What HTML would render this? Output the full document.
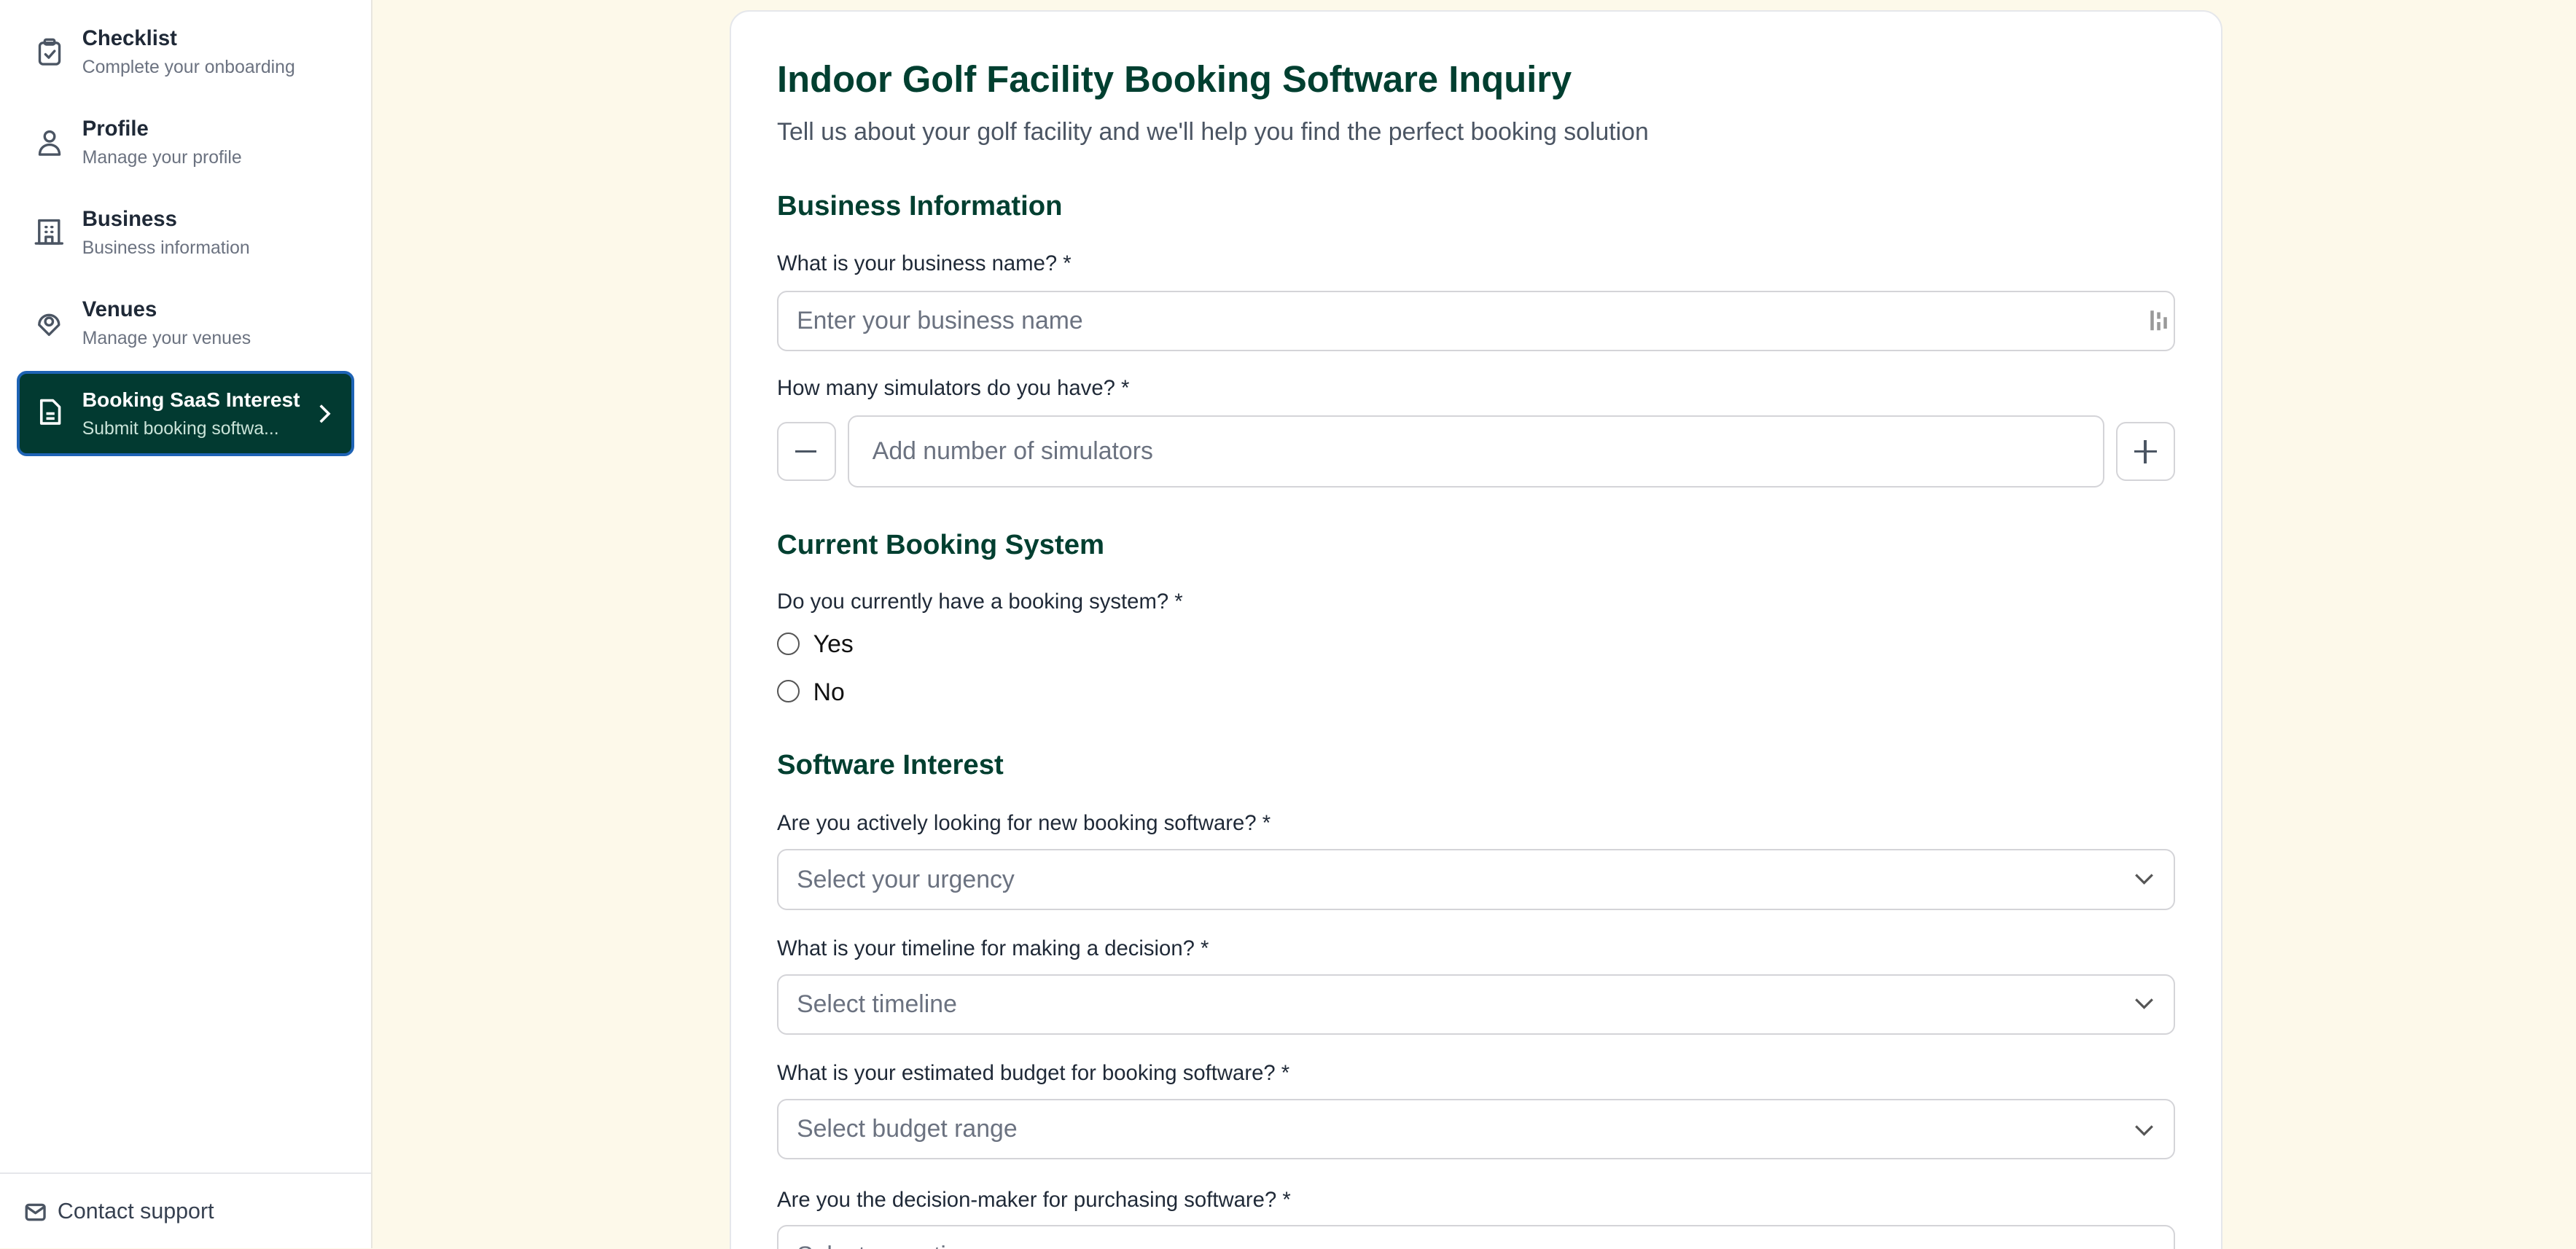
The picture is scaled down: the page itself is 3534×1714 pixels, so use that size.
<!DOCTYPE html>
<html><head><meta charset="utf-8"><style>
html{zoom:2.25383;overflow:hidden;height:760px}
body{margin:0;width:1568px;height:760px;overflow:hidden;background:#fdf9ea;font-family:"Liberation Sans",sans-serif;position:relative}
.a{position:absolute}
.side{left:0;top:0;width:226px;height:760px;background:#fff;border-right:1px solid #e8e6df}
.t{font-size:13px;color:#1f2937;font-weight:bold;white-space:nowrap}
.s{font-size:11px;color:#6b7280;white-space:nowrap}
.ic{stroke:#4b5563;fill:none;stroke-width:1.5;stroke-linecap:round;stroke-linejoin:round}
.card{left:444px;top:6px;width:907px;height:770px;background:#fff;border:1px solid #e5e7eb;border-radius:12px}
.h{color:#013f30;font-weight:bold}
.lb{font-size:13px;color:#1f2937;white-space:nowrap}
.in{border:1px solid #d4d4d8;border-radius:6px;background:#fff;box-sizing:border-box}
.ph{font-size:15px;color:#6b7280;white-space:nowrap}
</style></head><body>
<div class="a side">
 <svg class="a" style="left:22px;top:23px" width="16" height="18" viewBox="0 0 16 18"><rect class="ic" x="2" y="3" width="12" height="13" rx="2"/><rect class="ic" x="5" y="1" width="6" height="3" rx="1"/><path class="ic" d="M5.5 10l2 2 3.5-4"/></svg>
 <div class="a t" style="left:50px;top:16px">Checklist</div><div class="a s" style="left:50px;top:35px">Complete your onboarding</div>
 <svg class="a" style="left:22px;top:78px" width="16" height="18" viewBox="0 0 16 18"><circle class="ic" cx="8" cy="5" r="3"/><path class="ic" d="M2 16c0-4 3-6 6-6s6 2 6 6z"/></svg>
 <div class="a t" style="left:50px;top:71px">Profile</div><div class="a s" style="left:50px;top:90px">Manage your profile</div>
 <svg class="a" style="left:21px;top:132px" width="18" height="18" viewBox="0 0 18 18"><rect class="ic" x="3" y="2" width="12" height="14"/><path class="ic" d="M1 16h16M7 16v-4h4v4M7 6h.5M10.5 6h.5M7 9h.5M10.5 9h.5"/></svg>
 <div class="a t" style="left:50px;top:126px">Business</div><div class="a s" style="left:50px;top:145px">Business information</div>
 <svg class="a" style="left:21px;top:187px" width="18" height="18" viewBox="0 0 18 18"><path class="ic" d="M9 17l-6-6a6 6 0 1 1 12 0z"/><circle class="ic" cx="9" cy="9" r="2.3"/></svg>
 <div class="a t" style="left:50px;top:181px">Venues</div><div class="a s" style="left:50px;top:200px">Manage your venues</div>
 <div class="a" style="left:10px;top:226px;width:202px;height:48px;background:#023a31;border:2px solid #1e63b5;border-radius:6px"></div>
 <svg class="a" style="left:22px;top:242px" width="16" height="18" viewBox="0 0 16 18"><path d="M3 2h7l4 4v10H3z" stroke="#fff" fill="none" stroke-width="1.6" stroke-linejoin="round"/><path d="M6 10h5M6 13h5" stroke="#fff" stroke-width="1.6"/></svg>
 <div class="a t" style="left:50px;top:236px;color:#fff;font-size:12.5px">Booking SaaS Interest</div><div class="a s" style="left:50px;top:255px;color:#c9e3d8">Submit booking softwa...</div>
 <svg class="a" style="left:192px;top:245px" width="10" height="14" viewBox="0 0 10 14"><path d="M3 2l5 5-5 5" stroke="#fff" fill="none" stroke-width="1.6"/></svg>
 <div class="a" style="left:0;top:714px;width:226px;border-top:1px solid #e5e7eb"></div>
 <svg class="a" style="left:15px;top:732px" width="13" height="12" viewBox="0 0 13 12"><rect class="ic" x="1" y="1.5" width="11" height="9" rx="1.5"/><path class="ic" d="M1.5 3l5 3.5 5-3.5"/></svg>
 <div class="a" style="left:35px;top:730px;font-size:13.5px;color:#374151">Contact support</div>
</div>
<div class="a card"></div>
<div class="a h" style="left:473px;top:35px;font-size:22.5px">Indoor Golf Facility Booking Software Inquiry</div>
<div class="a" style="left:473px;top:72px;font-size:15px;color:#4b5563">Tell us about your golf facility and we'll help you find the perfect booking solution</div>
<div class="a h" style="left:473px;top:116px;font-size:17px">Business Information</div>
<div class="a lb" style="left:473px;top:153px">What is your business name? *</div>
<div class="a in" style="left:473px;top:177px;width:851px;height:37px"></div>
<div class="a ph" style="left:485px;top:187px">Enter your business name</div>
<svg class="a" style="left:1308px;top:188px" width="12" height="14"><path d="M2 1v12M6 2v4M6 8v5M10 5v7" stroke="#999" stroke-width="2"/></svg>
<div class="a lb" style="left:473px;top:229px">How many simulators do you have? *</div>
<div class="a in" style="left:473px;top:257px;width:36px;height:36px"></div>
<div class="a" style="left:484px;top:274px;width:13px;height:1.6px;background:#4b5563"></div>
<div class="a in" style="left:516px;top:253px;width:765px;height:44px"></div>
<div class="a ph" style="left:531px;top:266px">Add number of simulators</div>
<div class="a in" style="left:1288px;top:257px;width:36px;height:36px"></div>
<div class="a" style="left:1299px;top:274px;width:14px;height:1.6px;background:#4b5563"></div>
<div class="a" style="left:1305px;top:268px;width:1.6px;height:14px;background:#4b5563"></div>
<div class="a h" style="left:473px;top:322px;font-size:17px">Current Booking System</div>
<div class="a lb" style="left:473px;top:359px">Do you currently have a booking system? *</div>
<div class="a" style="left:473px;top:385px;width:12px;height:12px;border:1px solid #555;border-radius:50%"></div>
<div class="a" style="left:495px;top:384px;font-size:15px;color:#111">Yes</div>
<div class="a" style="left:473px;top:414px;width:12px;height:12px;border:1px solid #555;border-radius:50%"></div>
<div class="a" style="left:495px;top:413px;font-size:15px;color:#111">No</div>
<div class="a h" style="left:473px;top:456px;font-size:17px">Software Interest</div>
<div class="a lb" style="left:473px;top:494px">Are you actively looking for new booking software? *</div>
<div class="a in" style="left:473px;top:517px;width:851px;height:37px"></div>
<div class="a ph" style="left:485px;top:527px">Select your urgency</div>
<div class="a lb" style="left:473px;top:570px">What is your timeline for making a decision? *</div>
<div class="a in" style="left:473px;top:593px;width:851px;height:37px"></div>
<div class="a ph" style="left:485px;top:603px">Select timeline</div>
<div class="a lb" style="left:473px;top:646px">What is your estimated budget for booking software? *</div>
<div class="a in" style="left:473px;top:669px;width:851px;height:37px"></div>
<div class="a ph" style="left:485px;top:679px">Select budget range</div>
<div class="a lb" style="left:473px;top:723px">Are you the decision-maker for purchasing software? *</div>
<div class="a in" style="left:473px;top:746px;width:851px;height:37px"></div>
<div class="a ph" style="left:485px;top:756px">Select an option</div>
<svg class="a" style="left:1299px;top:531px" width="12" height="8"><path d="M1 1.5l5 5 5-5" stroke="#555" fill="none" stroke-width="1.4"/></svg>
<svg class="a" style="left:1299px;top:607px" width="12" height="8"><path d="M1 1.5l5 5 5-5" stroke="#555" fill="none" stroke-width="1.4"/></svg>
<svg class="a" style="left:1299px;top:684px" width="12" height="8"><path d="M1 1.5l5 5 5-5" stroke="#555" fill="none" stroke-width="1.4"/></svg>
</body></html>
